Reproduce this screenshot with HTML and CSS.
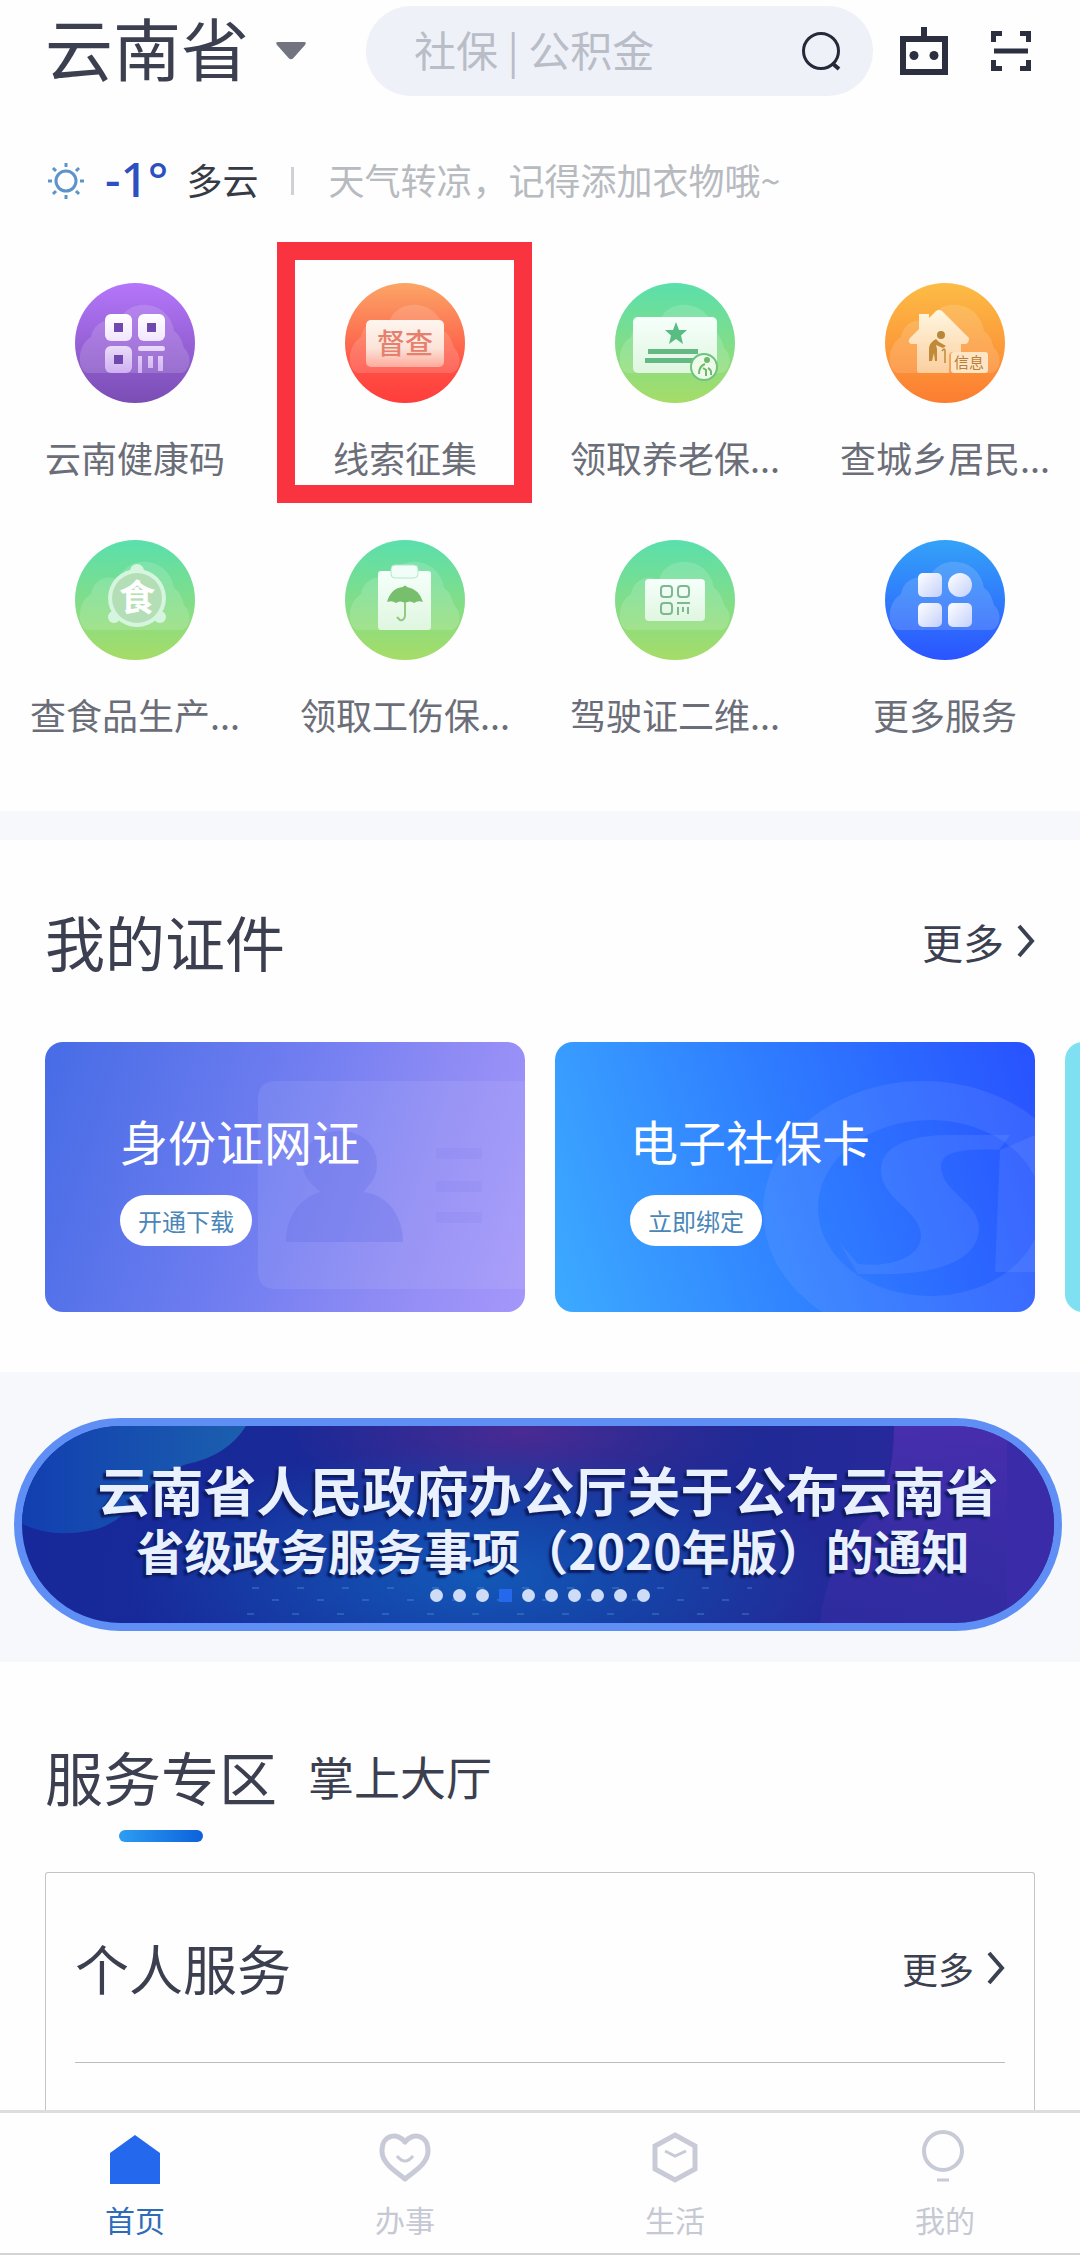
FILE: index.html
```html
<!DOCTYPE html>
<html lang="zh-CN">
<head>
<meta charset="utf-8">
<meta name="viewport" content="width=device-width, initial-scale=1">
<title>云南省政务服务</title>
<link rel="stylesheet" href="styles.css">
</head>
<body>
<svg class="defs" width="0" height="0" aria-hidden="true">
  <defs>
    <linearGradient id="purple" x1="0" y1="0" x2="0" y2="1"><stop offset="0" stop-color="#b476fa"/><stop offset="1" stop-color="#7a4db4"/></linearGradient>
    <linearGradient id="red" x1="0" y1="0" x2="0" y2="1"><stop offset="0" stop-color="#fba566"/><stop offset="0.75" stop-color="#ff4d43"/><stop offset="1" stop-color="#ff3d3b"/></linearGradient>
    <linearGradient id="green" x1="0" y1="0" x2="0" y2="1"><stop offset="0" stop-color="#5adfac"/><stop offset="1" stop-color="#a6dc68"/></linearGradient>
    <linearGradient id="orange" x1="0" y1="0" x2="0" y2="1"><stop offset="0" stop-color="#fcbc45"/><stop offset="1" stop-color="#fc7d31"/></linearGradient>
    <linearGradient id="blue" x1="0" y1="0" x2="0" y2="1"><stop offset="0" stop-color="#34a2f8"/><stop offset="1" stop-color="#2b54ff"/></linearGradient>
    <linearGradient id="lilac" gradientUnits="userSpaceOnUse" x1="0" y1="30" x2="0" y2="92"><stop offset="0" stop-color="#fff"/><stop offset="0.4" stop-color="#f3e9fd"/><stop offset="1" stop-color="#cdaef0"/></linearGradient>
    <linearGradient id="blush" x1="0" y1="0" x2="0" y2="1"><stop offset="0" stop-color="#fff6f0"/><stop offset="0.6" stop-color="#fbe3d9"/><stop offset="1" stop-color="#ffab9c"/></linearGradient>
    <linearGradient id="mint" x1="0" y1="0" x2="0" y2="1"><stop offset="0" stop-color="#f6fffb"/><stop offset="1" stop-color="#dff6e0"/></linearGradient>
    <linearGradient id="cream" x1="0" y1="0" x2="0" y2="1"><stop offset="0" stop-color="#fff6e0"/><stop offset="1" stop-color="#fbcf9f"/></linearGradient>
    <linearGradient id="pearl" x1="0" y1="0" x2="1" y2="1"><stop offset="0" stop-color="#fff"/><stop offset="1" stop-color="#c3d0fb"/></linearGradient>
    <path id="cloud" d="M13 90C2 89 1 63 16 54C18 41 31 33 44 40C50 14 94 15 99 48C105 52 107 58 109 65C119 74 114 90 106 90Z" fill="#fff" fill-opacity="0.15"/>
  </defs>
</svg>

<div class="page">
  <header class="topbar">
    <button class="province" type="button"><span class="province-name">云南省</span>
      <svg width="30" height="18" viewBox="0 0 30 18" aria-hidden="true"><path d="M2 0H28Q31 0 29 3L17 16.500Q15 18 13 16.500L1 3Q-1 0 2 0Z" fill="#72757f"/></svg>
    </button>
    <form class="search" role="search">
      <input class="search-input" type="search" aria-label="搜索" placeholder="社保 | 公积金">
      <button class="icon-button" type="button" aria-label="搜索">
        <svg width="40" height="40" viewBox="0 0 40 40" fill="none" stroke="#252a38" stroke-width="3"><circle cx="20" cy="20" r="17.500"/><path d="M31 32L38 38" stroke-width="4"/></svg>
      </button>
    </form>
    <div class="tools">
      <button class="icon-button" type="button" aria-label="智能客服">
        <svg width="48" height="48" viewBox="0 0 48 48"><path d="M21 0H27V9H48V48H0V9H21ZM6 15V42H42V15Z" fill="#2b2f40" fill-rule="evenodd"/><circle cx="14" cy="28.500" r="4.500" fill="#2b2f40"/><circle cx="34" cy="28.500" r="4.500" fill="#2b2f40"/></svg>
      </button>
      <button class="icon-button" type="button" aria-label="扫一扫">
        <svg width="42" height="42" viewBox="0 0 42 42" fill="none" stroke="#2b2f40" stroke-width="5"><path d="M3.500 12V3.500H12M30 3.500H38.500V12M38.500 30V38.500H30M12 38.500H3.500V30M4 21H38"/></svg>
      </button>
    </div>
  </header>

  <main class="content">
    <p class="weather">
      <svg class="sun" width="38" height="38" viewBox="0 0 38 38" fill="none" stroke="#5c93c9" aria-hidden="true"><circle cx="19" cy="19" r="10" stroke-width="3"/><path d="M19 1V5M19 33V37M1 19H5M33 19H37M6 6L9 9M29 29L32 32M6 32L9 29M29 9L32 6" stroke-width="3"/></svg>
      <span class="degrees">-1°</span>
      <span class="sky">多云</span>
      <span class="bar"></span>
      <span class="tip">天气转凉，记得添加衣物哦~</span>
    </p>

    <nav class="services" aria-label="常用服务">
      <a class="service" href="#">
        <svg class="badge" viewBox="0 0 120 120" aria-hidden="true"><circle cx="60" cy="60" r="60" fill="url(#purple)"/><use href="#cloud"/>
          <g fill="url(#lilac)"><rect x="30" y="31" width="27" height="27" rx="6"/><rect x="63" y="31" width="27" height="27" rx="6"/><rect x="30" y="63" width="27" height="27" rx="6"/><path d="M65 63H88Q90 63 90 65.500Q90 68 88 68H65Q63 68 63 65.500Q63 63 65 63ZM63 73H67V90H63ZM73 73H78V85H73ZM83 73H88V88H83Z"/></g>
          <path d="M39 40H48V49H39ZM72 40H81V49H72ZM39 72H48V81H39Z" fill="#6f49ae"/></svg>
        <span>云南健康码</span>
      </a>
      <a class="service marked" href="#">
        <svg class="badge" viewBox="0 0 120 120" aria-hidden="true"><circle cx="60" cy="60" r="60" fill="url(#red)"/><use href="#cloud"/><rect x="21" y="37" width="78" height="47" rx="5" fill="url(#blush)"/><text class="glyph medium" x="60" y="71" font-size="28" fill="#e5806c">督查</text></svg>
        <span>线索征集</span>
      </a>
      <a class="service" href="#">
        <svg class="badge" viewBox="0 0 120 120" aria-hidden="true"><circle cx="60" cy="60" r="60" fill="url(#green)"/><use href="#cloud"/><rect x="18" y="34" width="84" height="56" rx="5" fill="url(#mint)"/><path d="M61 39L64 47H72L66 52.500L68 61L61 56L54 61L56 52.500L50 47H58Z" fill="#57bd83"/><path d="M33 66H83V71H33ZM30 75H80V80H30Z" fill="#63b884"/><circle cx="89" cy="84" r="13" fill="#effbe9" stroke="#6cc47e" stroke-width="2"/><circle cx="92" cy="77" r="3" fill="#6fb96c"/><path d="M90 81Q84 83 84 91M88 85L91 87V93M93 85Q97 87 96 92" fill="none" stroke="#6fb96c" stroke-width="2"/></svg>
        <span>领取养老保...</span>
      </a>
      <a class="service" href="#">
        <svg class="badge" viewBox="0 0 120 120" aria-hidden="true"><circle cx="60" cy="60" r="60" fill="url(#orange)"/><use href="#cloud"/><path d="M34 31H44V35L51 28Q54 26 57 28L84 55Q84 60 81 61H76V69H68Q64 69 64 73V90H34Q32 90 32 87V61H26Q22 59 25 55L34 46Z" fill="url(#cream)"/><circle cx="56" cy="52" r="4" fill="#b8873a"/><path d="M51 56Q43 60 44 68V78H47L49 70L50 78H52V66L51 62L58 65L61 63L54 59Z" fill="#c08a38"/><path d="M57 68Q60 64 60 68V80" fill="none" stroke="#c08a38" stroke-width="1.500"/><rect x="66" y="69" width="37" height="21" rx="3" fill="#fde6c6"/><text class="glyph" x="84" y="85" font-size="15" fill="#bd7c33">信息</text></svg>
        <span>查城乡居民...</span>
      </a>
      <a class="service" href="#">
        <svg class="badge" viewBox="0 0 120 120" aria-hidden="true"><circle cx="60" cy="60" r="60" fill="url(#green)"/><use href="#cloud"/><g fill="#d6f5df"><circle cx="62" cy="31" r="7"/><circle cx="39" cy="77" r="6"/><circle cx="85" cy="77" r="6"/><circle cx="62" cy="58" r="29"/></g><circle cx="62" cy="58" r="25" fill="#b4dfb6"/><text class="glyph strong" x="62" y="71" font-size="36" fill="#fff">食</text></svg>
        <span>查食品生产...</span>
      </a>
      <a class="service" href="#">
        <svg class="badge" viewBox="0 0 120 120" aria-hidden="true"><circle cx="60" cy="60" r="60" fill="url(#green)"/><use href="#cloud"/><rect x="33" y="31" width="53" height="59" rx="3" fill="url(#mint)"/><rect x="46" y="25" width="27" height="13" rx="4" fill="#f1fdf7" stroke="#b5e6cd"/><path d="M42 62Q46 48 58 47Q60 44 62 47Q74 49 78 62Q73 60 69 63Q65 60 60 63Q55 60 51 63Q47 60 42 62Z" fill="#77bf6c"/><path d="M60 62V76Q59 81 55 80L52 77" fill="none" stroke="#91ca80" stroke-width="2"/></svg>
        <span>领取工伤保...</span>
      </a>
      <a class="service" href="#">
        <svg class="badge" viewBox="0 0 120 120" aria-hidden="true"><circle cx="60" cy="60" r="60" fill="url(#green)"/><use href="#cloud"/><rect x="30" y="39" width="60" height="42" rx="4" fill="url(#mint)"/><g fill="none" stroke="#7fb793" stroke-width="2"><rect x="46" y="46" width="11" height="11" rx="3"/><rect x="63" y="46" width="11" height="11" rx="3"/><rect x="46" y="63" width="11" height="11" rx="3"/><path d="M62 63H75M63 67V75M68 67V72M73 67V74"/></g></svg>
        <span>驾驶证二维...</span>
      </a>
      <a class="service" href="#">
        <svg class="badge" viewBox="0 0 120 120" aria-hidden="true"><circle cx="60" cy="60" r="60" fill="url(#blue)"/><use href="#cloud"/><g fill="url(#pearl)"><rect x="33" y="33" width="24" height="24" rx="5"/><circle cx="75" cy="45" r="12"/><rect x="33" y="63" width="24" height="24" rx="5"/><rect x="63" y="63" width="24" height="24" rx="5"/></g></svg>
        <span>更多服务</span>
      </a>
    </nav>

    <section class="documents">
      <div class="section-head">
        <h2 class="section-title">我的证件</h2>
        <a class="more" href="#">更多<svg width="18" height="34" viewBox="0 0 18 34" fill="none" stroke="#3c4152" stroke-width="4" aria-hidden="true"><path d="M2 2L15 17L2 32"/></svg></a>
      </div>
      <div class="cards">
        <article class="card card-id">
          <svg class="card-art" viewBox="0 0 480 270" aria-hidden="true"><path d="M480 39H231Q213 39 213 57V229Q213 247 231 247H480Z" fill="#fff" fill-opacity="0.08"/><path d="M295 89C318 89 332 104 332 122C332 138 322 144 319 150C345 154 358 176 358 200H241C241 176 254 156 275 150C270 144 258 138 258 122C258 104 272 89 295 89Z" fill="#5f6de6" fill-opacity="0.3"/><path d="M391 106H437V117H391ZM391 139H437V150H391ZM391 170H437V181H391Z" fill="#6f70e8" fill-opacity="0.1"/></svg>
          <h3 class="card-title">身份证网证</h3>
          <button class="pill" type="button">开通下载</button>
        </article>
        <article class="card card-social">
          <svg class="card-art" viewBox="0 0 480 270" aria-hidden="true"><g fill="#8dacff" fill-opacity="0.16"><path d="M368 39A160 130 0 0 1 528 169A160 130 0 0 1 368 299A160 130 0 0 1 208 169A160 130 0 0 1 368 39ZM375 78A112 88 0 0 0 263 166A112 88 0 0 0 375 254A112 88 0 0 0 487 166A112 88 0 0 0 375 78Z" fill-rule="evenodd"/><path d="M455 93H390C350 94 326 106 326 128C326 158 366 168 366 194C366 214 338 226 303 222L284 200L303 232H320C382 234 424 218 424 186C424 160 386 150 386 124C386 112 402 106 444 108Z"/><path d="M445 108L480 93V230H440Z"/></g></svg>
          <h3 class="card-title">电子社保卡</h3>
          <button class="pill" type="button">立即绑定</button>
        </article>
        <article class="card card-next"></article>
      </div>
    </section>

    <section class="notice">
      <a class="banner" href="#">
        <svg class="banner-art" viewBox="0 0 1032 197" preserveAspectRatio="none" aria-hidden="true">
          <defs><radialGradient id="glow"><stop offset="0" stop-color="#1259b8"/><stop offset="1" stop-color="#1259b8" stop-opacity="0"/></radialGradient><radialGradient id="plum"><stop offset="0" stop-color="#552b92" stop-opacity="0.8"/><stop offset="1" stop-color="#552b92" stop-opacity="0"/></radialGradient><linearGradient id="wave"><stop offset="0" stop-color="#123fb0"/><stop offset="1" stop-color="#1b5fae"/></linearGradient><linearGradient id="dusk" x1="0" y1="0" x2="0" y2="1"><stop offset="0" stop-color="#4f2fb2" stop-opacity="0.8"/><stop offset="1" stop-color="#3a2fa8" stop-opacity="0.4"/></linearGradient></defs>
          <path d="M0 0H224Q205 30 165 38C120 52 112 98 66 105Q30 112 0 98Z" fill="url(#wave)"/>
          <ellipse cx="500" cy="6" rx="240" ry="80" fill="url(#plum)"/><ellipse cx="455" cy="150" rx="360" ry="130" fill="url(#glow)"/>
          <path d="M912 0H1032V197H838Q846 130 886 92Q912 64 912 0Z" transform="translate(-40 0)" fill="url(#dusk)"/><path d="M985 0H1032V197H985Z" fill="#3a2ca8"/>
          <path d="M230 162H730M250 174H720M225 188H730" stroke="#4f9ad8" stroke-opacity="0.35" stroke-width="2" stroke-dasharray="7 38"/>
        </svg>
        <strong class="banner-lead">云南省人民政府办公厅关于公布云南省</strong>
        <strong class="banner-sub">省级政务服务事项（2020年版）的通知</strong>
        <span class="dots"><i></i><i></i><i></i><i class="on"></i><i></i><i></i><i></i><i></i><i></i><i></i></span>
      </a>
    </section>

    <section class="zone">
      <div class="tabs" role="tablist">
        <button class="tab active" type="button" role="tab" aria-selected="true">服务专区</button>
        <button class="tab" type="button" role="tab" aria-selected="false">掌上大厅</button>
      </div>
      <div class="panel">
        <div class="panel-head">
          <h3 class="panel-title">个人服务</h3>
          <a class="more small" href="#">更多<svg width="18" height="34" viewBox="0 0 18 34" fill="none" stroke="#3c4152" stroke-width="4" aria-hidden="true"><path d="M2 2L15 17L2 32"/></svg></a>
        </div>
      </div>
    </section>
  </main>

  <nav class="tabbar" aria-label="主导航">
    <a class="tabbar-item current" href="#"><svg width="52" height="56" viewBox="0 0 52 56" aria-hidden="true"><path d="M26 5L51 23V54H1V23Z" fill="#2468ed"/></svg>首页</a>
    <a class="tabbar-item" href="#"><svg width="52" height="56" viewBox="0 0 52 56" fill="none" stroke="#c8cbd7" stroke-width="5" stroke-linejoin="round" aria-hidden="true"><path d="M26 12C20 3 3 3 3 21C3 34 18 42 26 49C34 42 49 34 49 21C49 3 32 3 26 12Z"/><path d="M18 26Q26 36 34 26" stroke-width="3"/></svg>办事</a>
    <a class="tabbar-item" href="#"><svg width="52" height="56" viewBox="0 0 52 56" fill="none" stroke="#c8cbd7" stroke-width="5" aria-hidden="true"><path d="M26 5L46 16V39L26 50L6 39V16Z"/><path d="M16 21L26 26L37 21" stroke-width="3"/></svg>生活</a>
    <a class="tabbar-item" href="#"><svg width="52" height="56" viewBox="0 0 52 56" fill="none" stroke="#c8cbd7" stroke-width="4" aria-hidden="true"><circle cx="24" cy="21" r="19"/><path d="M18 50H30" stroke-width="3"/></svg>我的</a>
  </nav>
</div>
</body>
</html>
```
FILE: styles.css
```css
* {
  box-sizing: border-box;
}

body {
  margin: 0;
  background: #fefefe;
  color: #3b3f50;
  font-family: "Noto Sans CJK SC", "Noto Sans", sans-serif;
}

h2,
h3,
p {
  margin: 0;
  font-weight: 400;
}

a {
  color: inherit;
  text-decoration: none;
}

button {
  padding: 0;
  border: 0;
  background: none;
  color: inherit;
  font: inherit;
}

svg {
  display: block;
  flex: none;
}

.defs {
  position: absolute;
}

.page {
  display: flex;
  flex-direction: column;
  min-height: 100vh;
}

.content {
  display: flex;
  flex: 1;
  flex-direction: column;
}

/* Top bar */
.topbar {
  display: flex;
  align-items: center;
  padding: 6px 48px 0 45px;
}

.province {
  display: flex;
  align-items: center;
  gap: 27px;
  margin-right: 60px;
  font-size: 68px;
  line-height: 80px;
}

.province-name {
  padding-bottom: 8px;
}

.search {
  display: flex;
  flex: 1;
  align-items: center;
  min-width: 0;
  height: 90px;
  padding: 0 32px 0 48px;
  border-radius: 45px;
  background: #eff1f9;
}

.search-input {
  flex: 1;
  min-width: 0;
  padding: 0 0 4px;
  border: 0;
  outline: 0;
  background: none;
  color: #3b3f50;
  font: inherit;
  font-size: 42px;
  line-height: 60px;
}

.search-input::placeholder {
  color: #b9bdc7;
  opacity: 1;
}

.tools {
  display: flex;
  align-items: center;
  gap: 42px;
  margin-left: 27px;
}

/* Weather */
.weather {
  display: flex;
  align-items: center;
  padding: 57px 45px 0;
  font-size: 36px;
  line-height: 52px;
}

.sun {
  margin: 4px 20px 0 2px;
}

.degrees {
  margin-right: 18px;
  color: #2d50c0;
  font-family: "Noto Sans", sans-serif;
  font-size: 48px;
  font-weight: 500;
}

.sky {
  color: #363a45;
}

.bar {
  width: 3px;
  height: 28px;
  margin: 4px 34px 0 33px;
  background: #cfd1d6;
}

.tip {
  color: #b7babf;
}

/* Service shortcuts */
.services {
  display: grid;
  grid-template-columns: repeat(4, 1fr);
  row-gap: 56px;
  padding: 78px 0 70px;
}

.service {
  position: relative;
  display: flex;
  flex-direction: column;
  align-items: center;
  gap: 27px;
  color: #6b6e79;
  font-size: 36px;
  line-height: 54px;
  white-space: nowrap;
}

.badge {
  width: 120px;
  height: 120px;
}

.glyph {
  text-anchor: middle;
}

.medium {
  font-weight: 500;
}

.strong {
  font-weight: 700;
}

.marked::after {
  position: absolute;
  inset: -41px 8px -19px 7px;
  border: 18px solid #fa3340;
  content: "";
}

/* Documents */
.documents {
  padding: 61px 45px 60px;
  border-top: 29px solid #f6f8fc;
  overflow: hidden;
}

.section-head,
.panel-head {
  display: flex;
  align-items: center;
  justify-content: space-between;
}

.section-title {
  font-size: 60px;
  line-height: 80px;
}

.more {
  display: flex;
  align-items: center;
  gap: 13px;
  font-size: 41px;
  line-height: 72px;
}

.small {
  font-size: 36px;
}

.cards {
  display: flex;
  gap: 30px;
  margin-top: 61px;
}

.card {
  position: relative;
  flex: 0 0 calc((100% - 30px) / 2);
  min-height: 270px;
  padding: 62px 75px;
  border-radius: 18px;
  overflow: hidden;
  color: #fff;
}

.card-id {
  background: linear-gradient(108deg, #466ce6, #6f7df0 45%, #908cf5 75%, #a597fa);
}

.card-social {
  background: linear-gradient(72deg, #3caaff, #2f7dff 50%, #2852ff);
}

.card-next {
  background: #7fe0f2;
}

.card-art {
  position: absolute;
  inset: 0;
  width: 100%;
  height: 100%;
}

.card-title {
  position: relative;
  font-size: 48px;
  line-height: 72px;
}

.pill {
  position: relative;
  width: 132px;
  height: 51px;
  margin-top: 19px;
  border-radius: 26px;
  background: #fff;
  color: #4a86b8;
  font-size: 24px;
  line-height: 50px;
}

/* Notice banner */
.notice {
  padding: 46px 18px 31px 14px;
  background: #f7f8fb;
}

.banner {
  position: relative;
  display: flex;
  flex-direction: column;
  align-items: center;
  height: 213px;
  padding-top: 29px;
  border: 8px solid #5f8ff5;
  border-radius: 107px;
  overflow: hidden;
  background: linear-gradient(95deg, #17289a, #1a2a94 60%, #30289e);
  color: #e9f1ff;
  text-shadow: -3px 3px 2px #0d1c60;
  white-space: nowrap;
}

.banner-art {
  position: absolute;
  inset: 0;
  width: 100%;
  height: 100%;
}

.banner-lead {
  position: relative;
  margin-left: 20px;
  font-size: 53px;
  line-height: 68px;
}

.banner-sub {
  position: relative;
  margin-left: 30px;
  font-size: 48px;
  line-height: 52px;
}

.dots {
  position: relative;
  display: flex;
  gap: 10px;
  margin: 14px 0 0 4px;
}

.dots i {
  width: 13px;
  height: 13px;
  border-radius: 50%;
  background: #cfdcf8;
}

.dots .on {
  border-radius: 0;
  background: #2468ed;
}

/* Service zone */
.zone {
  display: flex;
  flex: 1;
  flex-direction: column;
  padding: 78px 45px 0;
}

.tabs {
  display: flex;
  align-items: flex-start;
  gap: 31px;
}

.tab {
  font-size: 46px;
  line-height: 70px;
}

.active {
  display: flex;
  flex-direction: column;
  align-items: center;
  gap: 18px;
  font-size: 58px;
  line-height: 72px;
}

.active::after {
  width: 84px;
  height: 12px;
  border-radius: 6px;
  background: linear-gradient(90deg, #2d9df2, #0c62dc);
  content: "";
}

.panel {
  flex: 1;
  min-height: 238px;
  margin-top: 30px;
  padding: 59px 29px 0;
  border: 1px solid #c3c4c8;
  border-bottom: 0;
  border-radius: 3px 3px 0 0;
}

.panel-head {
  padding-bottom: 58px;
  border-bottom: 1px solid #b9bbc0;
}

.panel-title {
  font-size: 54px;
  line-height: 72px;
}

/* Bottom navigation */
.tabbar {
  display: grid;
  grid-template-columns: repeat(4, 1fr);
  padding: 17px 0 12px;
  border-top: 3px solid #dcdddf;
  border-bottom: 2px solid #d3d4d6;
}

.tabbar-item {
  display: flex;
  flex-direction: column;
  align-items: center;
  gap: 11px;
  color: #c6c9d3;
  font-size: 30px;
  line-height: 44px;
}

.current {
  color: #2f6cb8;
}
```
